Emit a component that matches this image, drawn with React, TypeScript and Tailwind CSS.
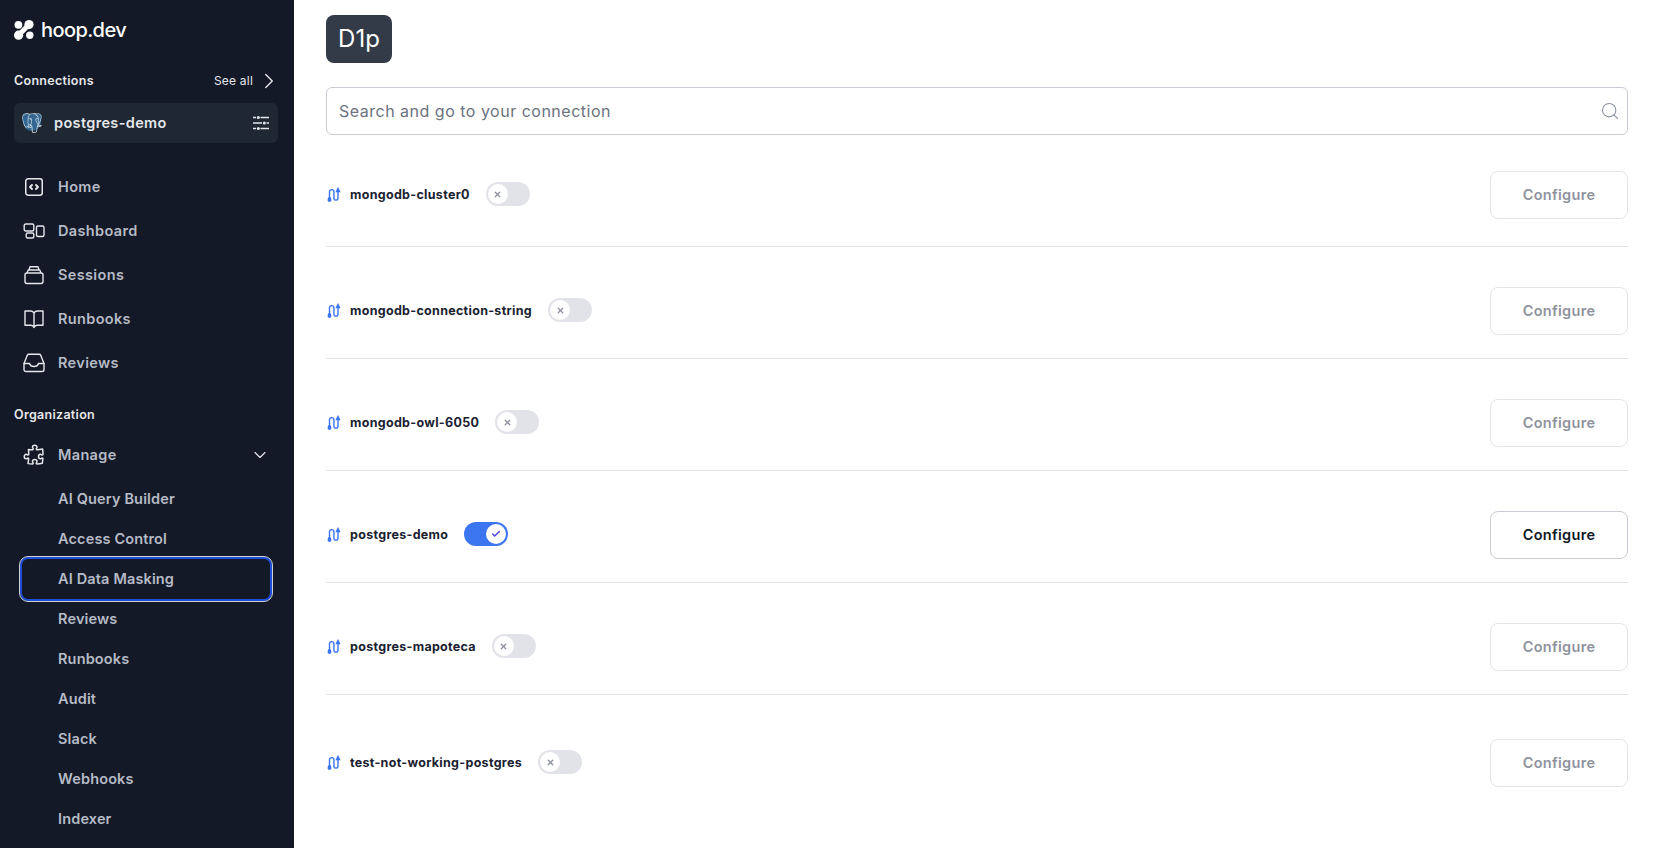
import { ChevronRight, ChevronDown, Search, X, Check } from "lucide-react"
import { SiPostgresql } from "react-icons/si"
import { HiOutlinePuzzlePiece } from "react-icons/hi2"

const FONT = "font-['Inter',sans-serif]"

// Sidebar icons
const CodeBoxIcon = () => (
  <svg width="20" height="20" viewBox="0 0 20 20" fill="none" stroke="currentColor" strokeWidth="1.5" strokeLinecap="round" strokeLinejoin="round">
    <rect x="1.75" y="1.75" width="16.5" height="16.5" rx="2.5" />
    <path d="M8 8l-2 2 2 2M12 8l2 2-2 2" strokeWidth="1.9" />
  </svg>
)

const DashboardIcon = () => (
  <svg width="22" height="16" viewBox="0 0 22 16" fill="none" stroke="currentColor" strokeWidth="1.4">
    <rect x="1.2" y="1" width="9.6" height="7" rx="1.5" />
    <rect x="3.2" y="10" width="7.6" height="5" rx="1.5" />
    <rect x="13.5" y="3" width="7.5" height="10.5" rx="1.5" />
  </svg>
)

const SessionsIcon = () => (
  <svg width="22" height="20" viewBox="0 0 22 20" fill="none" stroke="currentColor" strokeWidth="1.4" strokeLinejoin="round">
    <rect x="2" y="8" width="18" height="10.5" rx="2" />
    <path d="M4 8l1.2-3h11.6L18 8M6 5l1-3.2h8L16 5" />
  </svg>
)

const BookIcon = () => (
  <svg width="22" height="20" viewBox="0 0 22 20" fill="none" stroke="currentColor" strokeWidth="1.4" strokeLinejoin="round">
    <path d="M11 4.2V18.5M2 2h6a3.4 3.4 0 0 1 3 2.2A3.4 3.4 0 0 1 14 2h6v14.2h-6a3.4 3.4 0 0 0-3 2.3 3.4 3.4 0 0 0-3-2.3H2z" />
  </svg>
)

const TrayIcon = () => (
  <svg width="22" height="20" viewBox="0 0 22 20" fill="none" stroke="currentColor" strokeWidth="1.4" strokeLinejoin="round" strokeLinecap="round">
    <path d="M5.8 1.2h10.4a1.6 1.6 0 0 1 1.5 1L21 10.5v6a2 2 0 0 1-2 2H3a2 2 0 0 1-2-2v-6l3.3-8.3a1.6 1.6 0 0 1 1.5-1z" />
    <path d="M1.2 10.5h5.3c.6 2 2.3 3 4.5 3s3.900-1 4.500-3h5.300" />
  </svg>
)

const SlidersIcon = () => (
  <svg width="18" height="16" viewBox="0 0 18 16" fill="none" stroke="currentColor" strokeWidth="1.5" className="text-[#e5e7eb]">
    <path d="M1 2.500h3M8.500 2.500H17M1 8h9M14.500 8H17M1 13.500h3M8.500 13.500H17" />
    <circle cx="6.300" cy="2.500" r="1.500" fill="currentColor" stroke="none" />
    <circle cx="12.300" cy="8" r="1.500" fill="currentColor" stroke="none" />
    <circle cx="6.300" cy="13.500" r="1.500" fill="currentColor" stroke="none" />
  </svg>
)

const ConnectionIcon = () => (
  <svg width="16" height="16" viewBox="0 0 16 16" fill="none" stroke="#3b76f0" strokeWidth="1.4" strokeLinecap="round">
    <path d="M3.500 11V4.800a2.200 2.200 0 0 1 4.400 0v6.700a2.100 2.100 0 0 0 4.100 0V4" />
    <rect x="1.700" y="10" width="3.600" height="5" rx="1.800" fill="#3b76f0" stroke="none" />
    <path d="M10.500 4.500L12 1.500l1.500 3z" fill="#3b76f0" />
  </svg>
)

const HoopLogo = () => (
  <svg width="20" height="20" viewBox="0 0 20 20" fill="white">
    <circle cx="4.400" cy="4.800" r="3.900" />
    <circle cx="15" cy="4.600" r="4.600" />
    <circle cx="4.600" cy="15.200" r="4.600" />
    <circle cx="15.800" cy="15.200" r="3.700" />
    <path d="M15 4.600L4.600 15.200" stroke="white" strokeWidth="5" />
  </svg>
)

const PostgresIcon = () => (
  <span className="relative flex h-5 w-5 items-center justify-center">
    <span className="absolute left-[1px] top-[1px] h-[17px] w-[18px] rounded-t-lg rounded-b-full bg-[#336791]" />
    <SiPostgresql size={20} className="relative text-[#dfe7ef]" />
  </span>
)

const mainNav = [
  { label: "Home", icon: <CodeBoxIcon /> },
  { label: "Dashboard", icon: <DashboardIcon /> },
  { label: "Sessions", icon: <SessionsIcon /> },
  { label: "Runbooks", icon: <BookIcon /> },
  { label: "Reviews", icon: <TrayIcon /> },
]

const manageNav = [
  "AI Query Builder",
  "Access Control",
  "AI Data Masking",
  "Reviews",
  "Runbooks",
  "Audit",
  "Slack",
  "Webhooks",
  "Indexer",
]

const connections = [
  { name: "mongodb-cluster0", enabled: false, className: "h-[112px] pt-[36px]" },
  { name: "mongodb-connection-string", enabled: false, className: "h-[112px] pt-[40px]" },
  { name: "mongodb-owl-6050", enabled: false, className: "h-[112px] pt-[40px]" },
  { name: "postgres-demo", enabled: true, className: "h-[112px] pt-[40px]" },
  { name: "postgres-mapoteca", enabled: false, className: "h-[112px] pt-[40px]" },
  { name: "test-not-working-postgres", enabled: false, className: "h-[112px] pt-[44px] border-b-0" },
]

const Toggle = ({ enabled }: { enabled: boolean }) => (
  <div
    className={`flex h-6 w-11 items-center rounded-full p-[2px] ${
      enabled ? "justify-end bg-[#3b76f0]" : "justify-start bg-[#e1e3e9]"
    }`}
  >
    <div className="flex h-5 w-5 items-center justify-center rounded-full bg-white">
      {enabled ? (
        <Check size={10} strokeWidth={3.5} className="text-[#4f46e5]" />
      ) : (
        <X size={9} strokeWidth={3.5} className="text-[#8b8f9c]" />
      )}
    </div>
  </div>
)

const Sidebar = () => (
  <aside className="flex h-full w-[294px] shrink-0 flex-col overflow-hidden bg-[#131926] pl-[14px] pr-[16px]">
    <div className="mt-[15px] flex h-[30px] items-center gap-[7px]">
      <HoopLogo />
      <span className="text-[20px] font-medium tracking-[-0.6px] text-white">hoop.dev</span>
    </div>
    <div className="mt-[25px] flex h-[22px] items-center justify-between">
      <span className="text-[12.5px] font-semibold tracking-[0.3px] text-[#e5e7eb]">Connections</span>
      <span className="-mr-[4px] flex items-center gap-[3px] text-[12px] tracking-[0.2px] text-[#e5e7eb]">
        See all
        <ChevronRight size={26} strokeWidth={1.3} />
      </span>
    </div>
    <div className="mt-[11px] flex h-10 items-center justify-between rounded-md bg-[#1f2733] pl-[8px] pr-[8px]">
      <div className="flex items-center gap-[12px]">
        <PostgresIcon />
        <span className="pb-[1px] text-[14.5px] font-semibold tracking-[0.35px] text-[#e5e7eb]">postgres-demo</span>
      </div>
      <SlidersIcon />
    </div>
    <nav className="mt-[22px] flex flex-col">
      {mainNav.map((item) => (
        <div key={item.label} className="flex h-11 items-center gap-[12px] pl-[8px] text-[#b6bbc6]">
          <span className="flex w-[24px] justify-center text-[#e5e7eb]">{item.icon}</span>
          <span className="pb-[1px] text-[14.5px] font-semibold tracking-[0.35px]">{item.label}</span>
        </div>
      ))}
    </nav>
    <div className="mt-[20px] flex h-[20px] items-center text-[12.5px] font-semibold tracking-[0.3px] text-[#e5e7eb]">
      Organization
    </div>
    <div className="mt-[8px] flex h-11 items-center justify-between pl-[8px] pr-[8px] text-[#b6bbc6]">
      <div className="flex items-center gap-[12px]">
        <HiOutlinePuzzlePiece size={24} className="text-[#e5e7eb]" />
        <span className="pb-[1px] text-[14.5px] font-semibold tracking-[0.35px]">Manage</span>
      </div>
      <ChevronDown size={20} strokeWidth={1.4} className="text-[#e5e7eb]" />
    </div>
    <div className="mt-[2px] flex flex-col">
      {manageNav.map((item) => (
        <div
          key={item}
          className={`flex shrink-0 items-center pb-[1px] text-[14.5px] font-semibold tracking-[0.15px] text-[#b6bbc6] ${
            item === "AI Data Masking"
              ? "-my-[2px] ml-[6px] h-[44px] w-[252px] rounded-lg border-2 border-[#1d4ed8] pl-[36px] outline outline-1 outline-white/80"
              : "ml-[5px] h-10 w-[254px] pl-[39px]"
          }`}
        >
          {item}
        </div>
      ))}
    </div>
  </aside>
)

const ConnectionRow = ({ name, enabled, className }: { name: string; enabled: boolean; className: string }) => (
  <div className={`flex items-start justify-between border-b border-[#e3e5ea] ${className}`}>
    <div className="flex h-12 items-center">
      <ConnectionIcon />
      <span className="ml-[8px] text-[12.5px] font-bold tracking-[0.3px] text-[#1a2130]">{name}</span>
      <div className="mb-[2px] ml-[16px]">
        <Toggle enabled={enabled} />
      </div>
    </div>
    <button
      className={`flex h-12 w-[138px] items-center justify-center rounded-lg border bg-white pb-[1px] text-[14.5px] font-semibold tracking-[0.3px] ${
        enabled ? "border-[#c9ccd4] text-[#111827]" : "border-[#e3e5ea] text-[#8f939e]"
      }`}
    >
      Configure
    </button>
  </div>
)

export default function App() {
  return (
    <div className={`flex h-screen w-full overflow-hidden bg-white ${FONT}`}>
      <Sidebar />
      <main className="min-w-0 flex-1 pl-[32px] pr-[32px] pt-[15px]">
        <div className="flex h-12 w-[66px] items-center justify-center rounded-lg bg-[#333b48] text-[24px] text-white">
          D1p
        </div>
        <div className="mt-[24px] flex h-12 items-center justify-between rounded-md border border-[#c9ccd4] pl-[12px] pr-[7px]">
          <span className="text-[16px] tracking-[0.5px] text-[#6b7280]">Search and go to your connection</span>
          <Search size={20} strokeWidth={1.3} className="text-[#8b93a1]" />
        </div>
        <div className="flex flex-col">
          {connections.map((connection) => (
            <ConnectionRow key={connection.name} {...connection} />
          ))}
        </div>
      </main>
    </div>
  )
}
